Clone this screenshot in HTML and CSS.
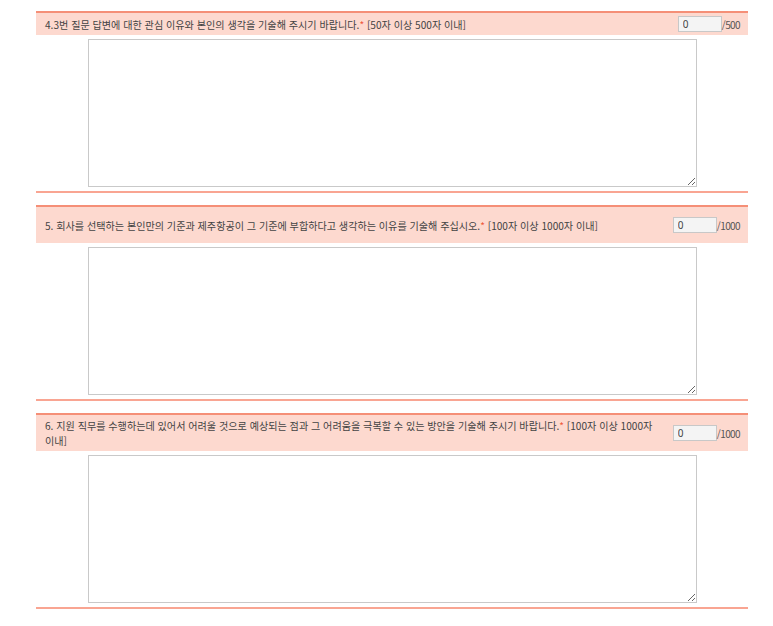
FILE: index.html
```html
<!DOCTYPE html>
<html lang="ko">

<head>
    <meta charset="UTF-8">
    <meta name="viewport" content="width=device-width, initial-scale=1.0">
    <title>자기소개서</title>
    <link rel="stylesheet" href="styles.css">
</head>

<body>
    <div class="essay">
        <div class="qa">
            <div class="qa-head">
                <p class="qa-label">4.3번 질문 답변에 대한 관심 이유와 본인의 생각을 기술해 주시기 바랍니다.<span class="req">*</span> [50자 이상 500자 이내]</p>
                <div class="qa-count"><input type="text" class="count-input" value="0" readonly><span class="count-max">/500</span></div>
            </div>
            <div class="qa-body">
                <textarea class="qa-text" name="answer4"></textarea>
            </div>
        </div>

        <div class="qa">
            <div class="qa-head qa-head-tall">
                <p class="qa-label">5. 회사를 선택하는 본인만의 기준과 제주항공이 그 기준에 부합하다고 생각하는 이유를 기술해 주십시오.<span class="req">*</span> [100자 이상 1000자 이내]</p>
                <div class="qa-count"><input type="text" class="count-input" value="0" readonly><span class="count-max">/1000</span></div>
            </div>
            <div class="qa-body">
                <textarea class="qa-text" name="answer5"></textarea>
            </div>
        </div>

        <div class="qa">
            <div class="qa-head qa-head-tall">
                <p class="qa-label">6. 지원 직무를 수행하는데 있어서 어려울 것으로 예상되는 점과 그 어려움을 극복할 수 있는 방안을 기술해 주시기 바랍니다.<span class="req">*</span> [100자 이상 1000자<br>이내]</p>
                <div class="qa-count"><input type="text" class="count-input" value="0" readonly><span class="count-max">/1000</span></div>
            </div>
            <div class="qa-body">
                <textarea class="qa-text" name="answer6"></textarea>
            </div>
        </div>
    </div>
</body>

</html>
```

FILE: styles.css
```css
body {
    font-family: "Noto Sans CJK KR", "Noto Sans", sans-serif;
    background-color: #ffffff;
    margin: 0;
    padding: 11px 0 0 36px;
    color: #444444;
}

.essay {
    width: 712px;
}

.qa {
    border-top: 2px solid #f58f77;
    border-bottom: 2px solid #f9a592;
    margin-bottom: 12px;
}

.qa-head {
    background-color: #fdd9cf;
    min-height: 22px;
    display: flex;
    align-items: center;
    padding: 0 8px 0 9px;
    box-sizing: border-box;
}

.qa-head-tall {
    min-height: 36px;
}

.qa-label {
    flex: 1;
    margin: 0;
    font-size: 10.1px;
    line-height: 15px;
}

.req {
    color: #ef5a3c;
}

.qa-count {
    display: flex;
    align-items: center;
    margin-left: 12px;
    white-space: nowrap;
}

.count-input {
    width: 44px;
    height: 16px;
    box-sizing: border-box;
    border: 1px solid #c8c8c8;
    background-color: #f4f4f4;
    padding: 0 4px;
    font-family: "Noto Sans", sans-serif;
    font-size: 10px;
    color: #444444;
}

.count-max {
    font-size: 10px;
    letter-spacing: -0.6px;
    color: #555555;
}

.qa-body {
    padding: 4px 0;
}

.qa-text {
    display: block;
    width: 609px;
    height: 148px;
    margin: 0 auto;
    box-sizing: border-box;
    border: 1px solid #c9c9c9;
    resize: both;
}
```
